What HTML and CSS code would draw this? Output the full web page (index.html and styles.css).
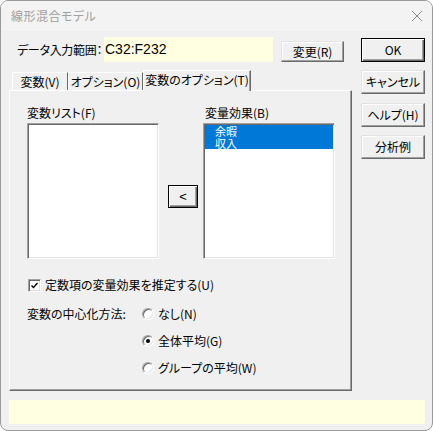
FILE: index.html
```html
<!DOCTYPE html>
<html lang="ja">
<head>
<meta charset="utf-8">
<title>線形混合モデル</title>
<link rel="stylesheet" href="styles.css">
</head>
<body>
<div class="window">
  <div class="titlebar">
    <span class="title">線形混合モデル</span>
    <svg class="close" width="12" height="12" viewBox="0 0 12 12"><path d="M1 1L11 11M11 1L1 11" stroke="#8a8a8a" stroke-width="1" fill="none"/></svg>
  </div>
  <div class="content">
    <div class="top">
      <div class="main">
        <div class="range-row">
          <span class="range-label">データ入力範囲：</span>
          <div class="range-field">C32:F232</div>
          <button class="btn change-btn">変更(R)</button>
        </div>
        <div class="tabs">
          <div class="tab tab1">変数(V)</div>
          <div class="tab tab2">オプション(O)</div>
          <div class="tab tab3 active">変数のオプション(T)</div>
        </div>
        <div class="panel">
          <div class="lists">
            <div class="list-label">変数リスト(F)</div>
            <div class="list-label right-label">変量効果(B)</div>
            <div class="listbox left-list"></div>
            <button class="btn default arrow-btn">&lt;</button>
            <div class="listbox right-list">
              <div class="item selected">余暇</div>
              <div class="item selected">収入</div>
            </div>
          </div>
          <div class="check-row">
            <span class="checkbox"><svg width="9" height="9" viewBox="0 0 9 9"><path d="M1.5 4.5L3.5 6.5L7.5 2" stroke="#000" stroke-width="1.4" fill="none"/></svg></span>
            <span>定数項の変量効果を推定する(U)</span>
          </div>
          <div class="radio-group">
            <div class="radio-row">
              <span class="group-label">変数の中心化方法:</span>
              <span class="radio"></span><span class="radio-text">なし(N)</span>
            </div>
            <div class="radio-row indent">
              <span class="radio checked"><span class="dot"></span></span><span class="radio-text">全体平均(G)</span>
            </div>
            <div class="radio-row indent">
              <span class="radio"></span><span class="radio-text">グループの平均(W)</span>
            </div>
          </div>
        </div>
      </div>
      <div class="side">
        <button class="btn default side-btn">OK</button>
        <button class="btn side-btn">キャンセル</button>
        <button class="btn side-btn help">ヘルプ(H)</button>
        <button class="btn side-btn">分析例</button>
      </div>
    </div>
    <div class="status-bar"></div>
  </div>
</div>
</body>
</html>
```
FILE: styles.css
```css
* { box-sizing: border-box; }
html, body { margin: 0; padding: 0; background: #ffffff; }
body {
  font-family: "Noto Sans CJK JP", "Liberation Sans", sans-serif;
  font-size: 12px;
  line-height: 14px;
  color: #000;
  font-feature-settings: "palt";
}
.window {
  width: 433px;
  height: 431px;
  border: 1px solid #9a9a9a;
  border-radius: 8px;
  background: #f0f0f0;
  overflow: hidden;
  display: flex;
  flex-direction: column;
}
.titlebar {
  height: 30px;
  background: #f3f3f3;
  display: flex;
  align-items: center;
  justify-content: space-between;
  padding: 0 9px 0 10px;
}
.title { color: #a0a0a0; font-size: 12px; letter-spacing: 0.5px; }
.close { display: block; }
.content {
  flex: 1;
  padding: 6px 0 0 8px;
  display: flex;
  flex-direction: column;
}
.top {
  display: grid;
  grid-template-columns: 343px 64px;
  column-gap: 9px;
}
.main { display: flex; flex-direction: column; }
.range-row {
  display: flex;
  height: 25px;
  align-items: center;
}
.range-label { width: 95px; padding-left: 8px; white-space: nowrap; font-size: 12px; letter-spacing: -0.3px; }
.range-field {
  width: 169px;
  height: 25px;
  background: #ffffe1;
  font-family: "Liberation Sans", sans-serif;
  font-size: 14px;
  line-height: 25px;
  padding-left: 1px;
  font-feature-settings: normal;
}
.btn {
  font-family: inherit;
  font-size: 12px;
  line-height: 14px;
  color: #000;
  background: #f0f0f0;
  border: 1px solid;
  border-color: #e3e3e3 #696969 #696969 #e3e3e3;
  box-shadow: inset -1px -1px #a0a0a0, inset 1px 1px #ffffff;
  padding: 0;
  margin: 0;
  font-feature-settings: "palt";
}
.btn.default {
  border: 1px solid #000;
  box-shadow: inset 1px 1px #ffffff, inset -1px -1px #696969, inset -2px -2px #a0a0a0;
}
.change-btn { width: 63px; height: 21px; margin-left: 8px; align-self: flex-end; }
.tabs {
  display: flex;
  margin-top: 8px;
  padding-left: 3px;
  height: 20px;
  align-items: flex-end;
  position: relative;
  z-index: 1;
}
.tab {
  height: 18px;
  border-top: 1px solid #ffffff;
  border-left: 1px solid #ffffff;
  border-right: 1px solid #696969;
  text-align: center;
  line-height: 17px;
  white-space: nowrap;
}
.tab1 { width: 56px; }
.tab2 { width: 75px; border-left: 1px solid #ffffff; }
.tab3 { width: 108px; }
.tab.active {
  height: 21px;
  margin-bottom: -1px;
  background: #f0f0f0;
  line-height: 18px;
  padding-bottom: 2px;
  box-shadow: inset -1px 0 #a0a0a0;
}
.panel {
  height: 301px;
  border-top: 1px solid #ffffff;
  border-left: 1px solid #ffffff;
  border-right: 1px solid #696969;
  border-bottom: 1px solid #696969;
  box-shadow: inset -1px -1px #a0a0a0;
  padding: 15px 0 0 17px;
}
.lists {
  display: grid;
  grid-template-columns: 132px 44px 132px;
  grid-template-rows: 17px 136px;
}
.list-label { height: 17px; line-height: 14px; }
.right-label { grid-column: 3; padding-left: 2px; }
.left-list { grid-column: 1; grid-row: 2; }
.arrow-btn {
  grid-column: 2; grid-row: 2;
  width: 30px; height: 23px;
  margin: 62px 0 0 9px;
  font-family: "Liberation Sans", sans-serif;
  font-size: 13px;
}
.right-list { grid-column: 3; grid-row: 2; }
.listbox {
  background: #ffffff;
  border: 1px solid;
  border-color: #a0a0a0 #ffffff #ffffff #a0a0a0;
  box-shadow: inset 1px 1px #696969, inset -1px -1px #e3e3e3;
  padding: 1px;
  height: 136px;
}
.item {
  height: 12px;
  line-height: 12px;
  padding-left: 10px;
  font-size: 11px;
}
.item.selected { background: #0078d7; color: #ffffff; }
.check-row {
  display: flex;
  align-items: center;
  height: 14px;
  margin-top: 19px;
  padding-left: 1px;
}
.checkbox {
  width: 13px; height: 13px;
  background: #ffffff;
  border: 1px solid;
  border-color: #a0a0a0 #ffffff #ffffff #a0a0a0;
  box-shadow: inset 1px 1px #696969, inset -1px -1px #e3e3e3;
  display: flex; align-items: center; justify-content: center;
  margin-right: 4px;
}
.checkbox svg { display: block; }
.radio-group { margin-top: 8px; }
.radio-row {
  display: flex;
  align-items: center;
  height: 27px;
}
.radio-row.indent { padding-left: 115px; }
.group-label { width: 115px; white-space: nowrap; }
.radio {
  width: 12px; height: 12px;
  border-radius: 50%;
  background: #ffffff;
  border: 1px solid;
  border-color: #a0a0a0 #ffffff #ffffff #a0a0a0;
  box-shadow: inset 1px 1px #696969, inset -1px -1px #e3e3e3;
  display: flex; align-items: center; justify-content: center;
  margin-right: 4px;
}
.dot { width: 4px; height: 4px; border-radius: 50%; background: #000; }
.side {
  display: flex;
  flex-direction: column;
  padding-top: 1px;
  gap: 8px;
}
.side-btn { width: 64px; height: 24px; }
.side-btn.help { margin-top: 1px; }
.status-bar {
  margin-top: 9px;
  width: 416px;
  height: 24px;
  background: #ffffe1;
}
```
